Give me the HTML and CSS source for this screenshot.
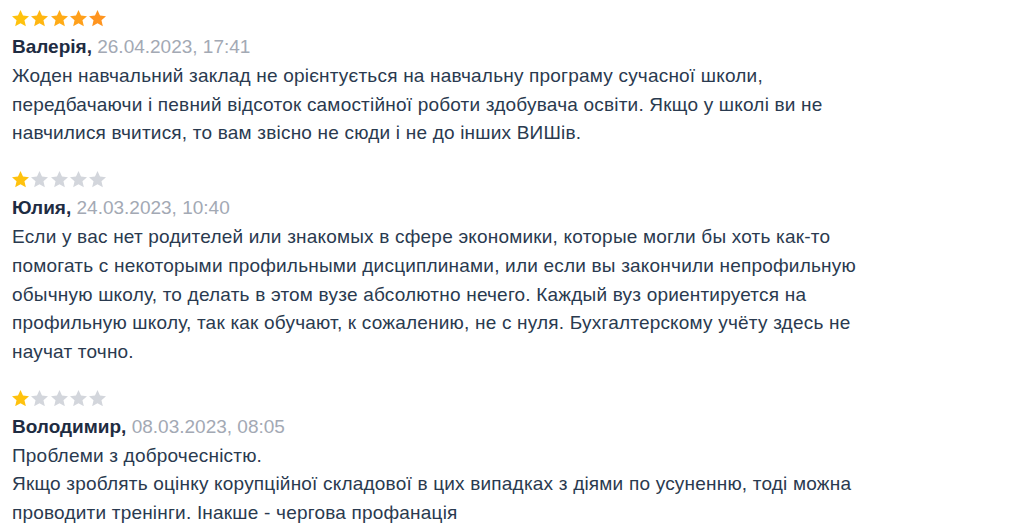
FILE: index.html
```html
<!DOCTYPE html>
<html lang="uk">
<head>
<meta charset="utf-8">
<link rel="stylesheet" href="styles.css">
</head>
<body>
<div class="reviews">
  <article class="review">
    <div class="stars">
      <svg class="star s1" viewBox="1.5 1.5 21 20.2"><path d="M12 1.5l3.1 6.9 7.4.7-5.6 5 1.7 7.4L12 17.7l-6.6 3.8 1.7-7.4-5.6-5 7.4-.7z"/></svg>
      <svg class="star s2" viewBox="1.5 1.5 21 20.2"><path d="M12 1.5l3.1 6.9 7.4.7-5.6 5 1.7 7.4L12 17.7l-6.6 3.8 1.7-7.4-5.6-5 7.4-.7z"/></svg>
      <svg class="star s3" viewBox="1.5 1.5 21 20.2"><path d="M12 1.5l3.1 6.9 7.4.7-5.6 5 1.7 7.4L12 17.7l-6.6 3.8 1.7-7.4-5.6-5 7.4-.7z"/></svg>
      <svg class="star s4" viewBox="1.5 1.5 21 20.2"><path d="M12 1.5l3.1 6.9 7.4.7-5.6 5 1.7 7.4L12 17.7l-6.6 3.8 1.7-7.4-5.6-5 7.4-.7z"/></svg>
      <svg class="star s5" viewBox="1.5 1.5 21 20.2"><path d="M12 1.5l3.1 6.9 7.4.7-5.6 5 1.7 7.4L12 17.7l-6.6 3.8 1.7-7.4-5.6-5 7.4-.7z"/></svg>
    </div>
    <div class="meta"><span class="author">Валерія,</span> <span class="date">26.04.2023, 17:41</span></div>
    <p class="text">Жоден навчальний заклад не орієнтується на навчальну програму сучасної школи, передбачаючи і певний відсоток самостійної роботи здобувача освіти. Якщо у школі ви не навчилися вчитися, то вам звісно не сюди і не до інших ВИШів.</p>
  </article>
  <article class="review">
    <div class="stars">
      <svg class="star s1" viewBox="1.5 1.5 21 20.2"><path d="M12 1.5l3.1 6.9 7.4.7-5.6 5 1.7 7.4L12 17.7l-6.6 3.8 1.7-7.4-5.6-5 7.4-.7z"/></svg>
      <svg class="star off" viewBox="1.5 1.5 21 20.2"><path d="M12 1.5l3.1 6.9 7.4.7-5.6 5 1.7 7.4L12 17.7l-6.6 3.8 1.7-7.4-5.6-5 7.4-.7z"/></svg>
      <svg class="star off" viewBox="1.5 1.5 21 20.2"><path d="M12 1.5l3.1 6.9 7.4.7-5.6 5 1.7 7.4L12 17.7l-6.6 3.8 1.7-7.4-5.6-5 7.4-.7z"/></svg>
      <svg class="star off" viewBox="1.5 1.5 21 20.2"><path d="M12 1.5l3.1 6.9 7.4.7-5.6 5 1.7 7.4L12 17.7l-6.6 3.8 1.7-7.4-5.6-5 7.4-.7z"/></svg>
      <svg class="star off" viewBox="1.5 1.5 21 20.2"><path d="M12 1.5l3.1 6.9 7.4.7-5.6 5 1.7 7.4L12 17.7l-6.6 3.8 1.7-7.4-5.6-5 7.4-.7z"/></svg>
    </div>
    <div class="meta"><span class="author">Юлия,</span> <span class="date">24.03.2023, 10:40</span></div>
    <p class="text">Если у вас нет родителей или знакомых в сфере экономики, которые могли бы хоть как-то помогать с некоторыми профильными дисциплинами, или если вы закончили непрофильную обычную школу, то делать в этом вузе абсолютно нечего. Каждый вуз ориентируется на профильную школу, так как обучают, к сожалению, не с нуля. Бухгалтерскому учёту здесь не научат точно.</p>
  </article>
  <article class="review">
    <div class="stars">
      <svg class="star s1" viewBox="1.5 1.5 21 20.2"><path d="M12 1.5l3.1 6.9 7.4.7-5.6 5 1.7 7.4L12 17.7l-6.6 3.8 1.7-7.4-5.6-5 7.4-.7z"/></svg>
      <svg class="star off" viewBox="1.5 1.5 21 20.2"><path d="M12 1.5l3.1 6.9 7.4.7-5.6 5 1.7 7.4L12 17.7l-6.6 3.8 1.7-7.4-5.6-5 7.4-.7z"/></svg>
      <svg class="star off" viewBox="1.5 1.5 21 20.2"><path d="M12 1.5l3.1 6.9 7.4.7-5.6 5 1.7 7.4L12 17.7l-6.6 3.8 1.7-7.4-5.6-5 7.4-.7z"/></svg>
      <svg class="star off" viewBox="1.5 1.5 21 20.2"><path d="M12 1.5l3.1 6.9 7.4.7-5.6 5 1.7 7.4L12 17.7l-6.6 3.8 1.7-7.4-5.6-5 7.4-.7z"/></svg>
      <svg class="star off" viewBox="1.5 1.5 21 20.2"><path d="M12 1.5l3.1 6.9 7.4.7-5.6 5 1.7 7.4L12 17.7l-6.6 3.8 1.7-7.4-5.6-5 7.4-.7z"/></svg>
    </div>
    <div class="meta"><span class="author">Володимир,</span> <span class="date">08.03.2023, 08:05</span></div>
    <p class="text">Проблеми з доброчесністю.<br>Якщо зроблять оцінку корупційної складової в цих випадках з діями по усуненню, тоді можна проводити тренінги. Інакше - чергова профанація</p>
  </article>
</div>
</body>
</html>
```

FILE: styles.css
```css
html, body {
  margin: 0;
  padding: 0;
  background: #ffffff;
}

body {
  font-family: "Liberation Sans", Arial, sans-serif;
  font-size: 19px;
  line-height: 28.7px;
  color: #2a3a4f;
}

.reviews {
  padding: 4px 12px 0 12px;
  width: 850px;
}

.review {
  margin-bottom: 17px;
}

.stars {
  display: flex;
  align-items: center;
  gap: 2.3px;
  height: 29px;
}

.star {
  width: 17px;
  height: 16.4px;
  display: block;
}

.s1 { fill: #ffc20e; }
.s2 { fill: #ffb611; }
.s3 { fill: #ffab16; }
.s4 { fill: #ffa01b; }
.s5 { fill: #ff9520; }
.off { fill: #d3d6dc; }

.meta {
  height: 29px;
}

.author {
  font-weight: 700;
  color: #1e2c42;
}

.date {
  color: #a3a9b4;
}

.text {
  margin: 0;
  letter-spacing: 0.2px;
}
```
